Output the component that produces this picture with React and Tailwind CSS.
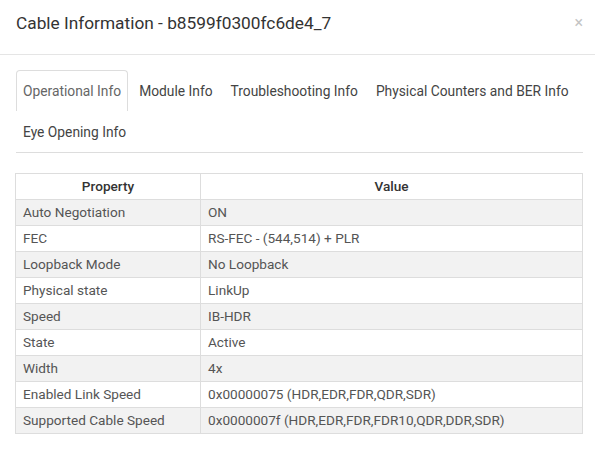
import React, { useState } from 'react';

const tabs = [
  'Operational Info',
  'Module Info',
  'Troubleshooting Info',
  'Physical Counters and BER Info',
  'Eye Opening Info',
];

const rows = [
  ['Auto Negotiation', 'ON'],
  ['FEC', 'RS-FEC - (544,514) + PLR'],
  ['Loopback Mode', 'No Loopback'],
  ['Physical state', 'LinkUp'],
  ['Speed', 'IB-HDR'],
  ['State', 'Active'],
  ['Width', '4x'],
  ['Enabled Link Speed', '0x00000075 (HDR,EDR,FDR,QDR,SDR)'],
  ['Supported Cable Speed', '0x0000007f (HDR,EDR,FDR,FDR10,QDR,DDR,SDR)'],
];

export default function App() {
  const [active, setActive] = useState(0);

  return (
    <div className="w-[595px] h-[469px] bg-white font-['Roboto',sans-serif] text-[#555] overflow-hidden">
      {/* En-tête */}
      <div className="h-[55px] border-b border-[#e5e5e5] flex items-center justify-between pl-[16px] pr-[12px]">
        <h4 className="text-[17.3px] text-[#333] font-normal pb-[6px]">Cable Information - b8599f0300fc6de4_7</h4>
        <button className="text-[#c4c4c4] text-[16px] leading-none pb-[8px]">×</button>
      </div>

      <div className="pl-[16px] pr-[12px] pt-[15px]">
        {/* Onglets */}
        <ul className="flex flex-wrap border-b border-[#ddd] text-[13.8px]">
          {tabs.map((t, i) => (
            <li
              key={t}
              onClick={() => setActive(i)}
              className={
                'h-[41px] px-[6px] mr-[4px] flex items-center whitespace-nowrap cursor-pointer rounded-t-[4px] border border-b-0 ' +
                (active === i ? 'border-[#ddd] text-[#666]' : 'border-transparent text-[#444]')
              }
            >
              {t}
            </li>
          ))}
        </ul>

        {/* Tableau des propriétés */}
        <table className="mt-[20px] w-[568px] -ml-px border-collapse text-[13.6px]">
          <thead>
            <tr className="h-[26px] bg-white">
              <th className="w-[185px] border border-[#ddd] font-medium text-[#333]">Property</th>
              <th className="border border-[#ddd] font-medium text-[#333]">Value</th>
            </tr>
          </thead>
          <tbody>
            {rows.map(([k, v], i) => (
              <tr key={k} className={'h-[26px] ' + (i % 2 === 0 ? 'bg-[#f2f2f2]' : 'bg-white')}>
                <td className="border border-[#ddd] pl-[7px]">{k}</td>
                <td className="border border-[#ddd] pl-[7px]">{v}</td>
              </tr>
            ))}
          </tbody>
        </table>
      </div>
    </div>
  );
}
